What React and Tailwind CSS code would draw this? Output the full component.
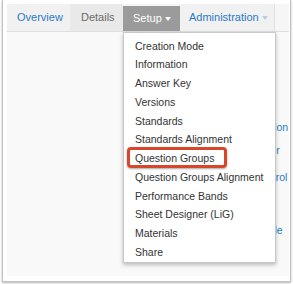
import React from "react";

const setupItems = [
  "Creation Mode",
  "Information",
  "Answer Key",
  "Versions",
  "Standards",
  "Standards Alignment",
  "Question Groups",
  "Question Groups Alignment",
  "Performance Bands",
  "Sheet Designer (LiG)",
  "Materials",
  "Share",
];

const Caret = ({ color }) => (
  <span
    className={`inline-block ml-[3px] mt-[1px] w-0 h-0 border-l-[3px] border-r-[3px] border-t-[4px] border-l-transparent border-r-transparent ${color}`}
  />
);

const App = () => {
  return (
    <div className="w-[293px] h-[284px] bg-white pl-[2px] font-['Liberation_Sans',Arial,sans-serif]">
      <div className="w-[289px] h-[282px] bg-white border-l border-r border-b border-[#c2c2c2] shadow-[0_1px_2px_rgba(0,0,0,0.3)] pt-[4px] pl-[4px] pr-[1px] pb-[5px]">
        <div className="h-full relative overflow-hidden bg-[#f9f9f9] flex flex-col">
          {/* tabs */}
          <div className="h-[28px] shrink-0 flex border-b border-[#dedede] bg-[#f4f4f4] text-[11px]">
            <div className="w-[63px] flex items-center pl-[10px] bg-[#f1f1f1] text-[#2a7cc7]">
              Overview
            </div>
            <div className="w-[53px] flex items-center pl-[11px] bg-[#e9e9e9] text-[#6b6b6b]">
              Details
            </div>
            <div className="w-[57px] flex items-center pl-[10px] bg-[#9b9b9b] text-white mt-[2px]">
              Setup
              <Caret color="border-t-white" />
            </div>
            <div className="w-[95px] flex items-center pl-[9px] bg-[#f1f1f1] text-[#2a7cc7] border-r border-[#e2e2e2]">
              Administration
              <Caret color="border-t-[#b9cde0]" />
            </div>
            <div className="flex-1 bg-[#f6f6f6]" />
          </div>

          {/* page content mostly hidden behind the menu */}
          <div className="flex-1 flex flex-col pl-[252px] text-[10.5px] leading-[14px] text-[#2a7cc7] whitespace-nowrap">
            <div className="mt-[88px]">Action</div>
            <div className="mt-[9px] pl-[3px]">Tier</div>
            <div className="mt-[13px] pl-[1px]">Patrol</div>
            <div className="mt-[39px] pl-[2px]">Role</div>
          </div>

          {/* dropdown */}
          <div className="absolute left-[116px] top-[28px] w-[153px] bg-white border border-[#c8c8c8] shadow-[0_2px_4px_rgba(0,0,0,0.25)] pt-[4px] text-[10.5px] text-[#333]">
            {setupItems.map((item) => (
              <div
                key={item}
                className="relative h-[18.75px] flex items-center pl-[11px] whitespace-nowrap"
              >
                {item}
                {item === "Question Groups" && (
                  <div className="absolute left-[3px] top-[-2.5px] w-[100px] h-[21px] border-[3px] border-[#d8472a] rounded-[4px] shadow-[0_1px_2px_rgba(0,0,0,0.35)]" />
                )}
              </div>
            ))}
          </div>
        </div>
      </div>
    </div>
  );
};

export default App;
